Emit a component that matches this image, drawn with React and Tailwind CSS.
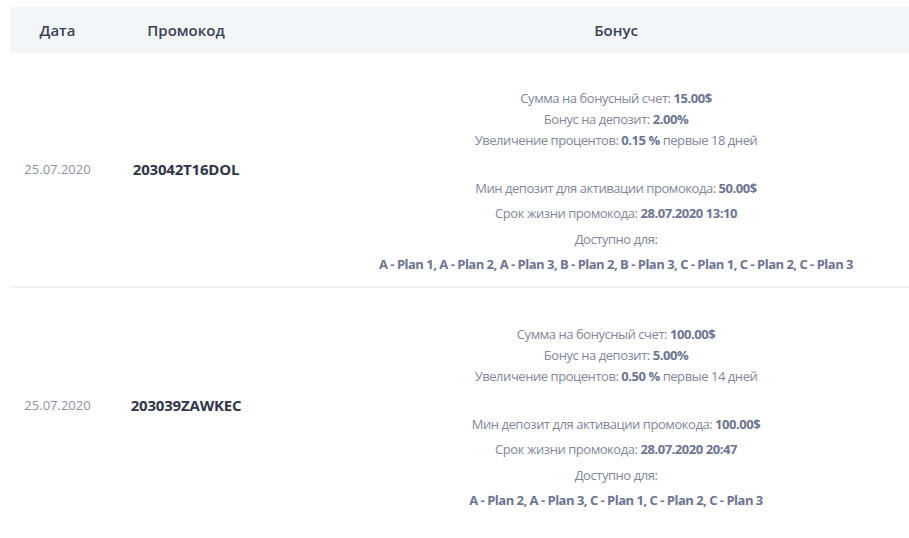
export default function App() {
  const rows = [
    {
      date: "25.07.2020",
      code: "203042T16DOL",
      sum: "15.00$",
      bonus: "2.00%",
      inc: "0.15 %",
      days: "18",
      min: "50.00$",
      life: "28.07.2020 13:10",
      plans: "A - Plan 1, A - Plan 2, A - Plan 3, B - Plan 2, B - Plan 3, C - Plan 1, C - Plan 2, C - Plan 3",
    },
    {
      date: "25.07.2020",
      code: "203039ZAWKEC",
      sum: "100.00$",
      bonus: "5.00%",
      inc: "0.50 %",
      days: "14",
      min: "100.00$",
      life: "28.07.2020 20:47",
      plans: "A - Plan 2, A - Plan 3, C - Plan 1, C - Plan 2, C - Plan 3",
    },
  ];
  return (
    <div
      className="w-[909px] h-[538px] overflow-hidden bg-white"
      style={{ fontFamily: '"Open Sans", "Noto Sans", sans-serif' }}
    >
      <div className="w-[955px] ml-[10px] pt-[7px]">
        <div className="flex h-[46px] items-center bg-[#f3f6f9] text-[15px] font-semibold text-[#3b4156]">
          <div className="w-[95px] text-center">Дата</div>
          <div className="w-[162px] text-center">Промокод</div>
          <div className="flex-1 text-center">Бонус</div>
        </div>
        {rows.map((r, i) => (
          <div
            key={i}
            className={
              "flex items-center h-[235px] " +
              (i === 0 ? "border-b-2 border-[#f0f2f5]" : "")
            }
          >
            <div className="w-[95px] text-center text-[13px] text-[#8d92a5]">{r.date}</div>
            <div className="w-[162px] text-center text-[15px] font-bold text-[#30364a] tracking-[-0.2px]">{r.code}</div>
            <div className="flex-1 flex flex-col items-center pt-[26px] text-[13px] text-[#82879d] tracking-[-0.45px]">
              <div className="leading-[21px]">
                Сумма на бонусный счет: <b className="font-bold text-[#6c7493]">{r.sum}</b>
              </div>
              <div className="leading-[21px]">
                Бонус на депозит: <b className="font-bold text-[#6c7493]">{r.bonus}</b>
              </div>
              <div className="leading-[21px]">
                Увеличение процентов: <b className="font-bold text-[#6c7493]">{r.inc}</b> первые {r.days} дней
              </div>
              <div className="leading-[25px] mt-[25px]">
                Мин депозит для активации промокода: <b className="font-bold text-[#6c7493]">{r.min}</b>
              </div>
              <div className="leading-[25px]">
                Срок жизни промокода: <b className="font-bold text-[#6c7493]">{r.life}</b>
              </div>
              <div className="leading-[26px]">Доступно для:</div>
              <div className="leading-[25px] font-bold text-[#6c7493] tracking-[-0.5px]">{r.plans}</div>
            </div>
          </div>
        ))}
      </div>
    </div>
  );
}
